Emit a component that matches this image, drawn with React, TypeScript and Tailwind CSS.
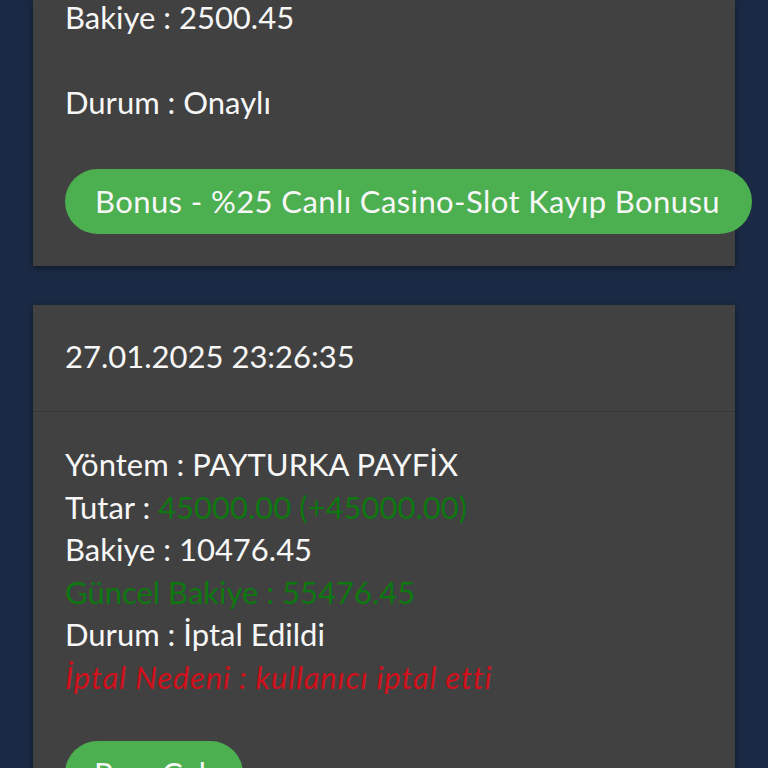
import React from "react";

const Line = ({ children, className = "" }: { children: React.ReactNode; className?: string }) => (
  <p className={`h-[42.5px] leading-[42.5px] whitespace-nowrap ${className}`}>{children}</p>
);

const App = () => {
  return (
    <div className="h-[768px] overflow-hidden bg-[#1b2a44] text-[#f7f7f7] font-['Lato','Noto_Sans',sans-serif] text-[31px]">
      <div className="px-[33px] flex flex-col gap-[39px]">
        {/* Approved bonus record */}
        <div className="bg-[#414141] shadow-[0_2px_6px_rgba(0,0,0,0.45)] pl-[32px] pb-[32px]">
          <p className="h-[34px] leading-[34px] whitespace-nowrap">Bakiye : 2500.45</p>
          <Line className="mt-[47px]">Durum : Onaylı</Line>
          <div className="mt-[45px] -mr-[17px]">
            <div className="h-[65px] rounded-full bg-[#4caf50] flex items-center px-[30px] whitespace-nowrap tracking-[0.4px]">
              Bonus - %25 Canlı Casino-Slot Kayıp Bonusu
            </div>
          </div>
        </div>

        {/* Cancelled deposit record */}
        <div className="bg-[#414141] shadow-[0_2px_6px_rgba(0,0,0,0.45)]">
          <div className="pl-[32px] pt-[30px] pb-[34px] border-b border-[#383838]">
            <Line>27.01.2025 23:26:35</Line>
          </div>
          <div className="pl-[32px] pt-[31px] pb-[32px]">
            <Line>Yöntem : PAYTURKA PAYFİX</Line>
            <Line>
              Tutar : <span className="text-[#0c780f]">45000.00 (+45000.00)</span>
            </Line>
            <Line>Bakiye : 10476.45</Line>
            <Line className="text-[#0c780f]">Güncel Bakiye : 55476.45</Line>
            <Line>Durum : İptal Edildi</Line>
            <Line className="italic text-[#d0101a] tracking-[0.8px]">İptal Nedeni : kullanıcı iptal etti</Line>
            <div className="mt-[43px] flex">
              <div className="h-[65px] rounded-full bg-[#4caf50] flex items-center px-[29px] whitespace-nowrap">
                Para Çek
              </div>
            </div>
          </div>
        </div>
      </div>
    </div>
  );
};

export default App;
